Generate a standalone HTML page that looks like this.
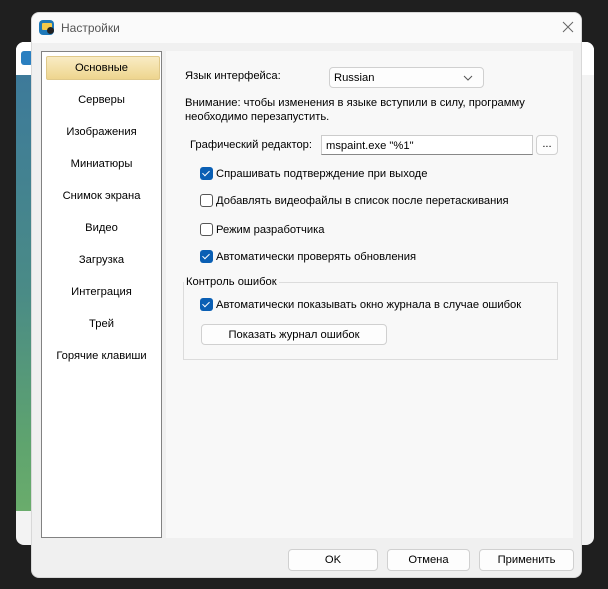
<!DOCTYPE html>
<html><head><meta charset="utf-8"><style>
body{margin:0;width:608px;height:589px;background:#1f1f1f;position:relative;overflow:hidden;font-family:"Liberation Sans","DejaVu Sans",sans-serif;font-size:11.2px;color:#000}
.a{position:absolute}
.back{left:16px;top:42px;width:578px;height:503px;background:#f3f3f3;border-radius:8px;overflow:hidden}
.strip{left:0;top:33px;width:16px;height:436px;background:linear-gradient(#3d7a9a,#4a8b86 50%,#5fa46e 85%,#6aac6c)}
.dlg{left:31px;top:12px;width:551px;height:566px;background:#f0f0f0;border-radius:8px;overflow:hidden;border:1px solid #d8d8d8;box-sizing:border-box}
.title{left:0;top:0;width:100%;height:30px;background:#fafafa}
.list{left:9px;top:38px;width:121px;height:487px;background:#fff;border:1px solid #828282;box-sizing:border-box}
.item{position:absolute;left:0;width:119px;text-align:center;line-height:17px}
.sel{left:4px;top:4px;width:114px;height:24px;background:linear-gradient(#f9ecc4,#eed58e);border:1px solid #e0c98a;box-sizing:border-box;border-radius:2px}
.panel{left:134px;top:38px;width:407px;height:487px;background:#f8f8f8}
.cb{position:absolute;width:13px;height:13px;border-radius:3px;box-sizing:border-box}
.on{background:#0a5fb4}
.off{border:1px solid #555;background:#fff}
.on:after{content:"";position:absolute;left:4px;top:2px;width:3px;height:6px;border:solid #fff;border-width:0 1.5px 1.5px 0;transform:rotate(45deg)}
.btn{position:absolute;background:#fdfdfd;border:1px solid #d0d0d0;border-radius:4px;box-sizing:border-box;text-align:center}
.t{position:absolute;white-space:nowrap;line-height:17px}
</style></head><body>
<div class="a back">
 <div class="a" style="left:0;top:0;width:100%;height:33px;background:#fff"></div>
 <div class="a strip"></div>
 <div class="a" style="left:5px;top:9px;width:12px;height:14px;background:#2a7fc0;border-radius:3px"></div>
</div>
<div class="a dlg">
 <div class="a title"></div>
 <div class="a" style="left:7px;top:7px;width:15px;height:15px;background:#1e78b8;border-radius:4px"></div>
 <div class="a" style="left:10px;top:10px;width:10px;height:7px;background:#f3c94a;border-radius:1px"></div>
 <div class="a" style="left:15px;top:14px;width:7px;height:7px;background:#222;border-radius:50%"></div>
 <div class="t" style="left:29px;top:7px;font-size:12px;color:#555">Настройки</div>
 <svg class="a" style="left:530px;top:8px" width="12" height="12"><path d="M1 1L11 11M11 1L1 11" stroke="#666" stroke-width="1"/></svg>
 <div class="a list">
  <div class="a sel"></div>
  <div class="item" style="top:8px">Основные</div>
  <div class="item" style="top:40px">Серверы</div>
  <div class="item" style="top:72px">Изображения</div>
  <div class="item" style="top:104px">Миниатюры</div>
  <div class="item" style="top:136px">Снимок экрана</div>
  <div class="item" style="top:168px">Видео</div>
  <div class="item" style="top:200px">Загрузка</div>
  <div class="item" style="top:232px">Интеграция</div>
  <div class="item" style="top:264px">Трей</div>
  <div class="item" style="top:296px">Горячие клавиши</div>
 </div>
 <div class="a panel">
  <div class="t" style="left:19px;top:17px">Язык интерфейса:</div>
  <div class="btn" style="left:163px;top:16px;width:155px;height:21px;text-align:left;padding:4px 0 0 4px">Russian<svg style="position:absolute;right:10px;top:7px" width="10" height="6"><path d="M1 1L5 5L9 1" stroke="#555" fill="none"/></svg></div>
  <div class="t" style="left:19px;top:45px;line-height:14px">Внимание: чтобы изменения в языке вступили в силу, программу<br>необходимо перезапустить.</div>
  <div class="t" style="left:24px;top:86px">Графический редактор:</div>
  <div class="a" style="left:155px;top:84px;width:212px;height:20px;background:#fff;border:1px solid #ccc;border-bottom-color:#888;box-sizing:border-box;padding:4px 0 0 4px">mspaint.exe "%1"</div>
  <div class="btn" style="left:370px;top:84px;width:22px;height:20px;line-height:17px">...</div>
  <div class="cb on" style="left:34px;top:116px"></div><div class="t" style="left:50px;top:115px">Спрашивать подтверждение при выходе</div>
  <div class="cb off" style="left:34px;top:143px"></div><div class="t" style="left:50px;top:142px">Добавлять видеофайлы в список после перетаскивания</div>
  <div class="cb off" style="left:34px;top:172px"></div><div class="t" style="left:50px;top:171px">Режим разработчика</div>
  <div class="cb on" style="left:34px;top:199px"></div><div class="t" style="left:50px;top:198px">Автоматически проверять обновления</div>
  <div class="a" style="left:17px;top:231px;width:375px;height:78px;border:1px solid #dcdcdc;box-sizing:border-box"></div>
  <div class="t" style="left:18px;top:223px;background:#f8f8f8;padding:0 2px">Контроль ошибок</div>
  <div class="cb on" style="left:34px;top:247px"></div><div class="t" style="left:50px;top:246px">Автоматически показывать окно журнала в случае ошибок</div>
  <div class="btn" style="left:35px;top:273px;width:186px;height:21px;line-height:20px">Показать журнал ошибок</div>
 </div>
 <div class="btn" style="left:256px;top:536px;width:90px;height:22px;line-height:21px">OK</div>
 <div class="btn" style="left:355px;top:536px;width:83px;height:22px;line-height:21px">Отмена</div>
 <div class="btn" style="left:447px;top:536px;width:95px;height:22px;line-height:21px">Применить</div>
</div>
</body></html>
